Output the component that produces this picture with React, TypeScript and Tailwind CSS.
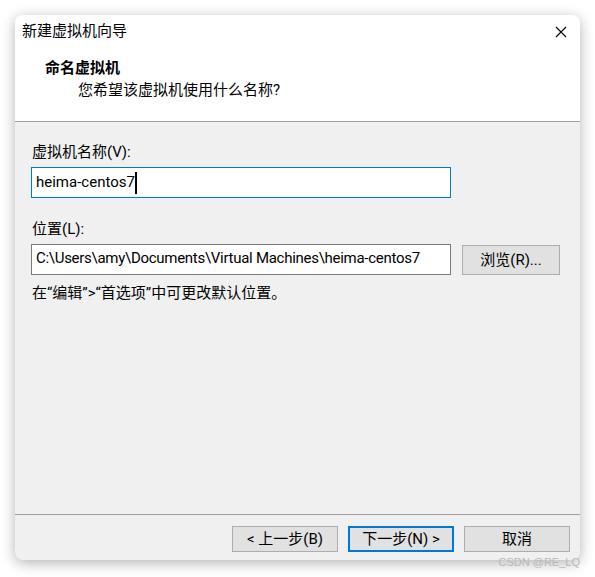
import React from 'react'

const font = { fontFamily: 'Roboto, "Noto Sans CJK SC", sans-serif' }

export default function App() {
  return (
    <div className="relative w-[595px] h-[577px] bg-white pt-[15px] pl-[15px] text-[15px] text-black" style={font}>
      {/* Dialog window */}
      <div className="w-[565px] h-[545px] flex flex-col rounded-lg overflow-hidden bg-[#f0f0f0] shadow-[0_3px_14px_rgba(0,0,0,0.3)]">
        {/* Header */}
        <div className="h-[107px] bg-white border-b border-[#a0a0a0]">
          <div className="h-[33px] flex items-center justify-between pl-[7px] pr-[13px]">
            <span className="leading-[19px]">新建虚拟机向导</span>
            <svg width="12" height="12" viewBox="0 0 12 12" className="text-black">
              <path d="M1 1 L11 11 M11 1 L1 11" stroke="currentColor" strokeWidth="1.1" />
            </svg>
          </div>
          <div className="mt-[11px] pl-[30px] font-bold leading-[19px]">命名虚拟机</div>
          <div className="mt-[3px] pl-[63px] leading-[19px]">您希望该虚拟机使用什么名称?</div>
        </div>

        {/* Body */}
        <div className="flex-1 pl-[16px] pr-[20px] pt-[21px]">
          <div className="pl-px leading-[19px]">虚拟机名称(V):</div>
          <div className="mt-[5px] w-[420px] h-[31px] bg-white border border-[#0078d7] flex items-center pl-[4px]">
            <span className="leading-[19px]">heima-centos7</span>
            <span className="w-[2px] h-[22px] bg-black"></span>
          </div>
          <div className="mt-[22px] pl-px leading-[19px]">位置(L):</div>
          <div className="mt-[5px] flex items-start gap-[11px]">
            <div className="w-[420px] h-[31px] bg-white border border-[#7a7a7a] flex items-center pl-[4px] pb-[3px]">
              <span className="leading-[19px] whitespace-nowrap tracking-[-0.28px]">C:\Users\amy\Documents\Virtual Machines\heima-centos7</span>
            </div>
            <button className="mt-px w-[98px] h-[30px] bg-[#e1e1e1] border border-[#adadad] flex items-center justify-center leading-[19px]">
              浏览(R)...
            </button>
          </div>
          <div className="mt-[9px] pl-px leading-[19px]">在“编辑”&gt;“首选项”中可更改默认位置。</div>
        </div>

        {/* Footer */}
        <div className="h-[46px] border-t border-[#a0a0a0] flex items-start justify-end gap-[10px] pt-[11px] pr-[10px]">
          <button className="w-[106px] h-[26px] bg-[#e1e1e1] border border-[#adadad] flex items-center justify-center leading-[19px]">
            &lt; 上一步(B)
          </button>
          <button className="w-[106px] h-[26px] bg-[#e1e1e1] border-2 border-[#0078d7] flex items-center justify-center leading-[19px]">
            下一步(N) &gt;
          </button>
          <button className="w-[106px] h-[26px] bg-[#e1e1e1] border border-[#adadad] flex items-center justify-center leading-[19px]">
            取消
          </button>
        </div>
      </div>

      {/* Watermark */}
      <div className="absolute right-[15px] top-[555px] text-[11px] leading-[14px] text-[#b8b8b8]" style={{ fontFamily: '"Liberation Sans", sans-serif' }}>
        CSDN @RE_LQ
      </div>
    </div>
  )
}
